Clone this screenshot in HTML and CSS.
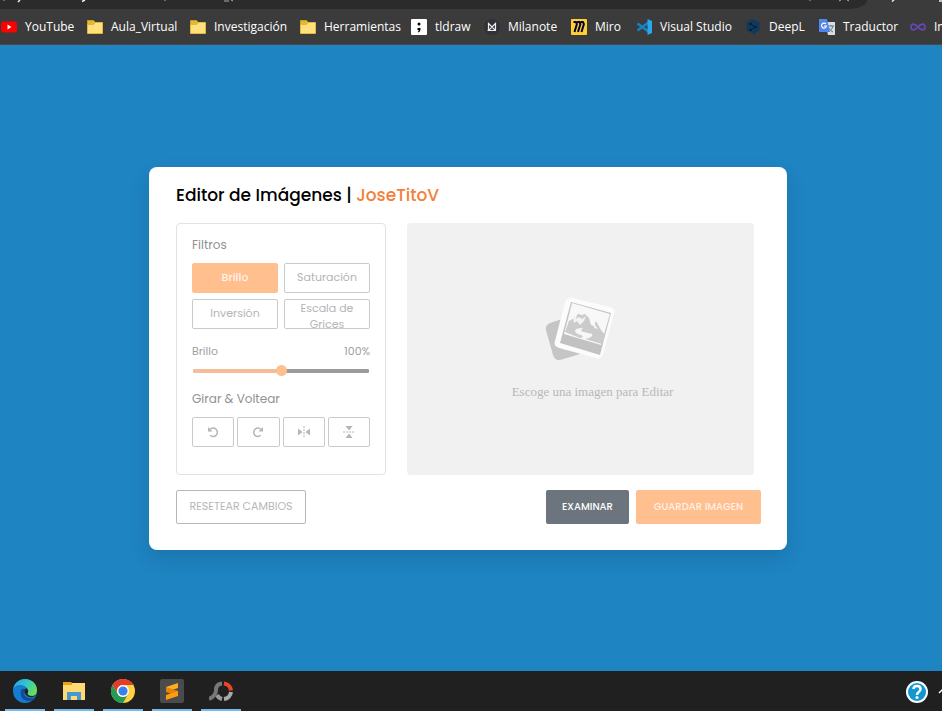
FILE: index.html
```html
<!DOCTYPE html>
<html lang="es">
<head>
<meta charset="utf-8">
<title>Editor de Imágenes</title>
<link rel="stylesheet" href="styles.css">
</head>
<body>
<header class="browser">
  <div class="toolbar">
    <div class="address"></div>
    <svg class="fragments" viewBox="0 0 942 9" aria-hidden="true"><path d="M4 0v1M165 0v1M224 1h5M231 0l2 1M810 0v1M839 1l2-1M847 0l2 1" stroke="#aaa" fill="none"/><path d="M20 0l-2 2M85 0l-3 1.500M894 0l-2 1.500M939 1h3" stroke="#eee" stroke-width="1.500"/></svg>
  </div>
  <nav class="bookmarks" aria-label="Marcadores">
    <a href="#" class="w-youtube"><svg viewBox="0 0 16 16"><rect y="2.500" width="16" height="11" rx="3" fill="#f00"/><path d="M6.500 5.500v5l4-2.500z" fill="#fff"/></svg>YouTube</a>
    <a href="#" class="w-aula"><svg viewBox="0 0 16 16"><use href="#folder"/></svg>Aula_Virtual</a>
    <a href="#" class="w-inv"><svg viewBox="0 0 16 16"><use href="#folder"/></svg>Investigación</a>
    <a href="#" class="w-herr"><svg viewBox="0 0 16 16"><use href="#folder"/></svg>Herramientas</a>
    <a href="#" class="w-tl"><svg viewBox="0 0 16 16"><rect width="16" height="16" rx="1" fill="#fff"/><circle cx="8" cy="5" r="1.500"/><path d="M6.500 9h3v1.500q0 2-2 3l-.7-.7q1-.8.900-1.800H6.500z"/></svg>tldraw</a>
    <a href="#" class="w-mila"><svg viewBox="0 0 16 16"><circle cx="8" cy="8" r="8" fill="#303038"/><path d="M4.500 11.500V4.500L8 8l3.500-3.500v7H4.500L8 8l3.500 3.500" fill="none" stroke="#eee" stroke-width="1.200"/></svg>Milanote</a>
    <a href="#" class="w-miro"><svg viewBox="0 0 16 16"><rect width="16" height="16" rx="1" fill="#ffd02f"/><path d="M2.500 3h2.400l1 2-2.400 8M6 3h2.400l1 2L7 13M9.500 3h2.400l1 2-2.400 8" fill="none" stroke="#050038" stroke-width="2"/></svg>Miro</a>
    <a href="#" class="w-vs"><svg viewBox="0 0 16 16"><path d="M12.500 3.500L1.500 11.500M1.500 4.500l11 8" stroke="#1683c7" stroke-width="2.500"/><path d="M11.500 0L16 2v12l-4.500 2z" fill="#28a9ee"/></svg>Visual Studio</a>
    <a href="#" class="w-deepl"><svg viewBox="0 0 16 16"><path d="M8 0l6.500 3.500v8L10 14v2l-3-2-5.500-2.500v-8z" fill="#0f3a5c"/><path d="M5.500 5l5 3-5 3" fill="none" stroke="#071e32"/><g fill="#071e32"><circle cx="5.500" cy="5" r="1.300"/><circle cx="10.500" cy="8" r="1.300"/><circle cx="5.500" cy="11" r="1.300"/></g></svg>DeepL</a>
    <a href="#" class="w-trad"><svg viewBox="0 0 16 16"><path d="M6 3h10v13H9z" fill="#d8dce0"/><path d="M9 7h6M12 6v1M14 7q-1 4-4 6M10 9q1 3 4 4" fill="none" stroke="#607d86"/><path d="M0 0h8l3 13H0z" fill="#4f86ec"/><path d="M7 5a2.500 2.500 0 1 0 .5 2H5" fill="none" stroke="#fff" stroke-width="1.200"/></svg>Traductor</a>
    <a href="#" class="w-last"><svg viewBox="0 0 16 16"><path d="M8 8C5 4.500 1 4 1 8s4 3.500 7 0 7-4 7 0-4 3.500-7 0z" fill="none" stroke="#6745b5" stroke-width="1.800"/></svg>In</a>
  </nav>
</header>

<main>
  <section class="card">
    <h1>Editor de Imágenes | <span>JoseTitoV</span></h1>
    <div class="workspace">
      <div class="panel">
        <h2>Filtros</h2>
        <div class="filters">
          <button class="active">Brillo</button><button>Saturación</button>
          <button>Inversión</button><button>Escala de Grices</button>
        </div>
        <div class="slider-info"><label for="level">Brillo</label><output for="level">100%</output></div>
        <input id="level" type="range" min="0" max="200" value="100">
        <h2 class="rotate-title">Girar &amp; Voltear</h2>
        <div class="rotate">
          <button aria-label="Girar a la izquierda"><svg viewBox="0 0 12 12"><path d="M3 3.500A4.200 4.200 0 1 1 3.200 9.300" fill="none" stroke="currentColor" stroke-width="1.500"/><path d="M1 1v4.500h4.500z"/></svg></button>
          <button aria-label="Girar a la derecha"><svg viewBox="0 0 12 12"><path d="M9 3.500A4.200 4.200 0 1 0 8.800 9.300" fill="none" stroke="currentColor" stroke-width="1.500"/><path d="M11 1v4.500H6.500z"/></svg></button>
          <button aria-label="Voltear horizontalmente"><svg viewBox="0 0 12 12"><path d="M0 2.500v7L4.500 6zM12 2.500v7L7.500 6z"/><path d="M6 0v12" stroke="currentColor" stroke-dasharray="2 1"/></svg></button>
          <button aria-label="Voltear verticalmente"><svg viewBox="0 0 12 12"><path d="M2.500 0h7L6 4.500zM2.500 12h7L6 7.500z"/><path d="M0 6h12" stroke="currentColor" stroke-dasharray="2 1"/></svg></button>
        </div>
      </div>
      <div class="preview">
        <svg viewBox="0 0 70 64" aria-hidden="true"><path d="M17 22L5 26q-5 2-4 7l7 25q2 6 7 5l20-6z" fill="#c5c5c5"/><path d="M27 1l38 9q6 2 4 7L58 57q-2 6-7 4L14 51q-6-2-4-7L20 5q2-5 7-4z" fill="#fcfcfc"/><path d="M26 5l40 11-11 42-40-12z" fill="#c2c2c2"/><path d="M27 6l38 11-9 31-37-11z" fill="#f8f8f8"/><path d="M20 35l4-11 5-3 4-4 4 1 3-1 4 4 2 7 3 1 2-5 5 9 4 5-3 9-17-5q9-2 7-5l-8-2q-5-1-1-4-8 0-8 3 1 3 6 4 4 2-1 3z" fill="#cbcbcb"/><path d="M28 21l4-3-1 4 3-2 3 2 4-3-2 5-4 4-3-4-3 2zM49 26l4 6-4-1z" fill="#f3f3f3"/></svg>
        <p>Escoge una imagen para Editar</p>
      </div>
    </div>
    <div class="actions">
      <button class="reset">RESETEAR CAMBIOS</button>
      <button class="browse">EXAMINAR</button>
      <button class="save">GUARDAR IMAGEN</button>
    </div>
  </section>
</main>

<footer class="taskbar">
  <button class="app" aria-label="Edge"><svg viewBox="0 0 24 24"><defs><linearGradient id="edge-green" x2="1" y2=".6"><stop stop-color="#249ee8"/><stop offset=".55" stop-color="#35c8c5"/><stop offset="1" stop-color="#6cdd50"/></linearGradient></defs><circle cx="12" cy="12" r="12" fill="#167bd2"/><path d="M0 11C1 4 6 0 12 0c7 0 12 5 12 11 0 5-4 7-8 6-3-.5-3-2-1.500-3 1.500-4-2-8-7-8-4 0-7 2-7.500 5z" fill="url(#edge-green)"/><path d="M8 11q-2 11 9 11 3-.5 5-4-6 3-10-1-2-3 1-7-4-1-5 1z" fill="#114d94"/><path d="M13 9q-3 4 0 7 4 4 9 1l2-1-4 1q-7 0-5-4 1-2-2-4z" fill="#202124"/></svg></button>
  <button class="app" aria-label="Explorador"><svg viewBox="0 0 24 24"><path d="M1 3h8l2 2h-1v3H1z" fill="#e8a317"/><path d="M10 4h13v17H1V6h9z" fill="#ffda73"/><path d="M5 21v-8h14v8h-4v-4H9v4z" fill="#4399d0"/></svg></button>
  <button class="app" aria-label="Chrome"><svg viewBox="0 0 24 24"><circle cx="12" cy="12" r="12" fill="#ffd140"/><path d="M1.600 6A12 12 0 0 1 22.400 6H12a6 6 0 0 0-5.200 9z" fill="#e33b2e"/><path d="M1.600 6A12 12 0 0 0 12 24l5.200-9A6 6 0 0 1 6.800 15z" fill="#239b54"/><circle cx="12" cy="12" r="6" fill="#fff"/><circle cx="12" cy="12" r="4.600" fill="#3c7eea"/></svg></button>
  <button class="app" aria-label="Sublime Text"><svg viewBox="0 0 24 24"><rect width="24" height="24" rx="2" fill="#4b4b4b"/><path d="M18 4v5L6 13V8z" fill="#ffae20"/><path d="M6 8v5l12 4v-5z" fill="#e88304"/><path d="M18 12v5L6 21v-5z" fill="#ff9c10"/></svg></button>
  <button class="app" aria-label="Monitor"><svg viewBox="0 0 24 24"><g fill="none" stroke-width="4"><path d="M15 4.500a8 8 0 0 1 7 7" stroke="#ef4424"/><path d="M22 13a8 8 0 0 1-7 7" stroke="#aaa"/><path d="M13 20a8 8 0 0 1-5-4" stroke="#999"/><path d="M13 4.500Q7 5 7 11 7 17 0 20" stroke="#777"/></g></svg></button>
  <button class="help" aria-label="Ayuda"><svg viewBox="0 0 24 24"><circle cx="12" cy="12" r="11" fill="#fff"/><circle cx="12" cy="12" r="9" fill="#1297d0"/><path d="M8.500 9q0-3 3.500-3 3.500 0 3.500 3 0 2-2 3.200-1.500 1-1.500 2.800" fill="none" stroke="#fff" stroke-width="2.500"/><circle cx="12" cy="17.500" r="1.600" fill="#fff"/></svg></button>
  <button class="more" aria-label="Mostrar iconos ocultos"><svg viewBox="0 0 12 12"><path d="M1 8l5-5 5 5" fill="none" stroke="#fff" stroke-width="1.300"/></svg></button>
</footer>
<svg class="symbols"><symbol id="folder" viewBox="0 0 16 16"><path d="M.5 1.500h6l2 2-2 2h-6z" fill="#e2b934" stroke="#c99c1b"/><path d="M.5 5.500h6l2-2h7v11H.5z" fill="#ffe07c" stroke="#dfb742"/></symbol></svg>
</body>
</html>
```

FILE: styles.css
```css
* { box-sizing: border-box; }
body {
  margin: 0;
  min-height: 100vh;
  display: flex;
  flex-direction: column;
  overflow: hidden;
  background: #1e84c2;
  font-family: Poppins, Inter, sans-serif;
}
button { font: inherit; padding: 0; margin: 0; }
svg { display: block; flex: none; }
h1, h2, p { margin: 0; font-weight: 400; }
.symbols { display: none; }

.browser { background: #3b3b3b; border-bottom: 1px solid #4a4a4a; }
.toolbar { height: 9px; position: relative; overflow: hidden; }
.address { width: 92%; height: 9px; background: #2b2b2b; border-bottom-right-radius: 18px 9px; }
.fragments { position: absolute; inset: 0; width: 100%; height: 9px; }
.bookmarks { height: 35px; display: flex; overflow: hidden; font: 12px "Open Sans", "Noto Sans", sans-serif; }
.bookmarks a { display: flex; align-items: center; gap: 8px; flex: none; color: #fff; text-decoration: none; white-space: nowrap; }
.bookmarks svg { width: 16px; height: 16px; }
.w-youtube { width: 87px; padding-left: 1px; }
.w-aula { width: 103px; }
.w-inv { width: 110px; }
.w-herr { width: 111px; }
.w-tl { width: 73px; }
.w-mila { width: 87px; }
.w-miro { width: 65px; }
.w-vs { width: 109px; }
.w-deepl { width: 74px; }
.w-trad { width: 91px; }

main { flex: 1; display: flex; align-items: center; justify-content: center; padding-right: 6px; }
.card {
  width: 638px;
  max-width: 100%;
  padding: 16px 26px 26px 27px;
  background: #fff;
  border-radius: 8px;
  box-shadow: 0 8px 20px rgba(0, 0, 0, .12);
}
h1 { font-size: 17px; line-height: 24px; font-weight: 500; color: #000; }
h1 span { color: #f37f3b; }
.workspace { display: flex; gap: 21px; margin: 16px 7px 15px 0; }
.panel { width: 210px; height: 252px; padding: 12px 15px; border: 1px solid #e2e2e2; border-radius: 4px; }
h2 { font-size: 12px; line-height: 18px; color: #919191; }
.filters { display: grid; grid-template-columns: 1fr 1fr; gap: 6px; margin-top: 9px; }
.filters button, .rotate button {
  height: 30px;
  border: 1px solid #c9cacb;
  border-radius: 2px;
  background: #fff;
  color: #b3b5b7;
  overflow: hidden;
}
.filters button { padding-bottom: 2px; font-size: 11px; line-height: 16px; }
.filters .active { background: #ffbf8f; border-color: #ffbf8f; color: #fff3eb; font-weight: 500; }
.slider-info { display: flex; justify-content: space-between; margin-top: 14px; font-size: 11px; line-height: 16px; color: #a0a0a0; }
input[type="range"] { display: block; appearance: none; width: calc(100% - 2px); height: 12px; margin: 6px 1px 0; background: none; }
input[type="range"]::-webkit-slider-runnable-track { height: 4px; border-radius: 1px; background: linear-gradient(90deg, #f2bd98 50%, #9b9b9b 50%); }
input[type="range"]::-webkit-slider-thumb { appearance: none; width: 11px; height: 11px; margin-top: -4px; border-radius: 50%; background: #ffbf8f; }
.rotate-title { margin-top: 13px; }
.rotate { display: grid; grid-template-columns: repeat(4, 1fr); gap: 3px; margin-top: 9px; }
.rotate button { display: grid; place-items: center; }
.rotate svg { width: 12px; height: 12px; fill: currentColor; }
.preview { flex: 1; display: flex; flex-direction: column; align-items: center; justify-content: center; gap: 22px; padding-left: 24px; background: #f1f1f1; border-radius: 4px; }
.preview svg { width: 70px; height: 64px; margin-right: 26px; }
.preview p { font: 13px/18px "Liberation Serif", serif; color: #b8b8b8; }
.actions { display: flex; gap: 7px; }
.actions button { height: 34px; border: 0; border-radius: 2px; font-size: 11px; }
.actions .reset { width: 130px; margin-right: auto; background: #fff; border: 1px solid #b5b8bb; color: #b5b8ba; }
.actions .browse { width: 83px; background: #6c757d; color: #fff; font-size: 10px; font-weight: 500; }
.actions .save { width: 125px; background: #ffbf8f; color: #fff0e5; font-size: 10px; font-weight: 500; }

.taskbar { height: 40px; display: flex; align-items: center; gap: 9px; padding-left: 5px; background: #202020; overflow: hidden; }
.taskbar button { flex: none; height: 40px; border: 0; background: none; display: grid; place-items: center; }
.app { width: 40px; }
.taskbar .app { padding-top: 2px; border-bottom: 2px solid #76b9ed; }
.taskbar .app svg, .help svg { width: 24px; height: 24px; }
.taskbar .help { width: 24px; margin-left: auto; padding-top: 2px; }
.more { width: 4px; overflow: hidden; }
.taskbar .more { justify-items: start; }
.more svg { width: 12px; height: 12px; }
```
